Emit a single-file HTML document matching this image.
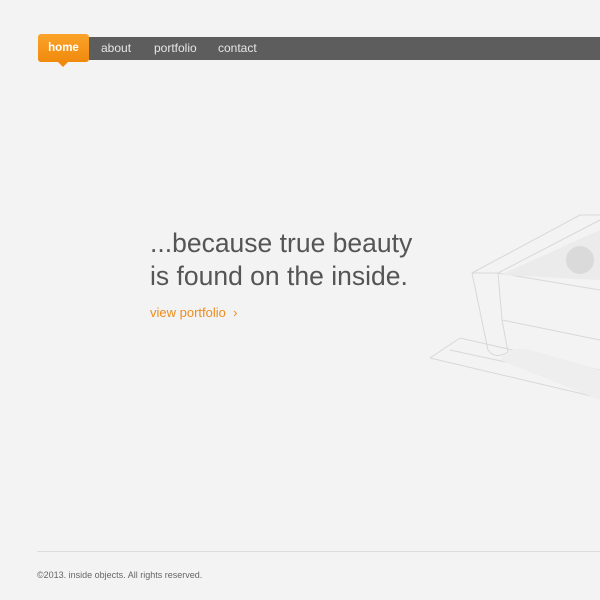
<!DOCTYPE html>
<html><head><meta charset="utf-8"><style>
body{margin:0;width:600px;height:600px;background:#f3f3f3;font-family:"Liberation Sans",sans-serif;position:relative;overflow:hidden}
.bar{position:absolute;left:89px;top:37px;width:511px;height:23px;background:#5d5d5d}
.home{position:absolute;left:38px;top:34px;width:51px;height:28px;background:linear-gradient(#fba32a,#f08a0c);border-radius:3px;color:#fff;font-size:11.5px;font-weight:bold;text-align:center;line-height:28px}
.home:after{content:"";position:absolute;left:20px;top:28px;border:5px solid transparent;border-top:5px solid #f08a0c}
.nav{position:absolute;top:37px;line-height:23px;color:#e6e6e6;font-size:12px}
h1{position:absolute;left:150px;top:227px;margin:0;font-weight:normal;font-size:26.5px;line-height:33px;color:#555}
.link{position:absolute;left:150px;top:305px;font-size:13px;color:#ec8d1e}
.line{position:absolute;left:37px;top:551px;width:563px;height:1px;background:#dcdcdc}
.foot{position:absolute;left:37px;top:570px;font-size:9px;color:#666}
</style></head><body>
<div class="bar"></div>
<div class="home">home</div>
<div class="nav" style="left:101px">about</div>
<div class="nav" style="left:154px">portfolio</div>
<div class="nav" style="left:218px">contact</div>
<svg style="position:absolute;left:400px;top:200px" width="200" height="210" viewBox="0 0 200 210" fill="none" stroke="#d8d8d8" stroke-width="1">
<path d="M72 73 L180 15 L200 15 M72 73 L98 73 L200 20 M72 73 L88 150 Q95 160 108 152 L102 120 L98 73"/>
<path d="M98 73 L200 90 M102 120 L200 140 M30 158 L60 138 L200 170 M30 158 L200 198 M50 150 L180 178"/>
<path d="M100 75 L200 30 L200 80 Z" fill="#ebebeb" stroke="none"/>
<circle cx="180" cy="60" r="14" fill="#dadada" stroke="none"/>
<path d="M100 160 Q110 145 130 150 L200 170 L200 200 Z" fill="#eeeeee" stroke="none"/>
</svg>
<h1>...because true beauty<br>is found on the inside.</h1>
<div class="link">view portfolio &nbsp;›</div>
<div class="line"></div>
<div class="foot">©2013. inside objects. All rights reserved.</div>
</body></html>
